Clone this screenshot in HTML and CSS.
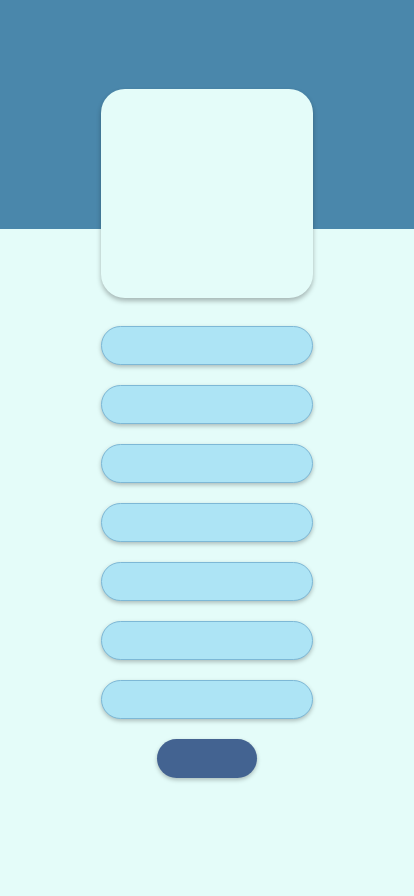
FILE: index.html
```html
<!DOCTYPE html>
<html>
<head>
<meta charset="utf-8">
<link rel="stylesheet" href="styles.css">
</head>
<body>
<main class="page">
  <div class="card"></div>
  <div class="list">
    <div class="pill"></div>
    <div class="pill"></div>
    <div class="pill"></div>
    <div class="pill"></div>
    <div class="pill"></div>
    <div class="pill"></div>
    <div class="pill"></div>
  </div>
  <button class="btn"></button>
</main>
</body>
</html>
```
FILE: styles.css
```css
html, body {
  margin: 0;
  padding: 0;
}
body {
  width: 414px;
  min-height: 896px;
  background: linear-gradient(#4a87ab 0, #4a87ab 229px, #e4fcf9 229px, #e4fcf9 100%);
  font-family: Roboto, sans-serif;
}
.page {
  display: flex;
  flex-direction: column;
  align-items: center;
  padding-top: 89px;
}
.card {
  width: 212px;
  height: 209px;
  border-radius: 24px;
  background: #e4fcf9;
  box-shadow: 0 3px 5px rgba(0, 0, 0, 0.28);
}
.list {
  display: flex;
  flex-direction: column;
  gap: 20px;
  margin-top: 28px;
}
.pill {
  width: 210px;
  height: 37px;
  border: 1px solid #7db8d6;
  border-radius: 20px;
  background: #ade4f5;
  box-shadow: 0 2px 4px rgba(0, 0, 0, 0.25);
}
.btn {
  margin-top: 20px;
  width: 100px;
  height: 39px;
  border: none;
  border-radius: 20px;
  background: #436391;
  box-shadow: 0 2px 4px rgba(0, 0, 0, 0.25);
  padding: 0;
}
```
